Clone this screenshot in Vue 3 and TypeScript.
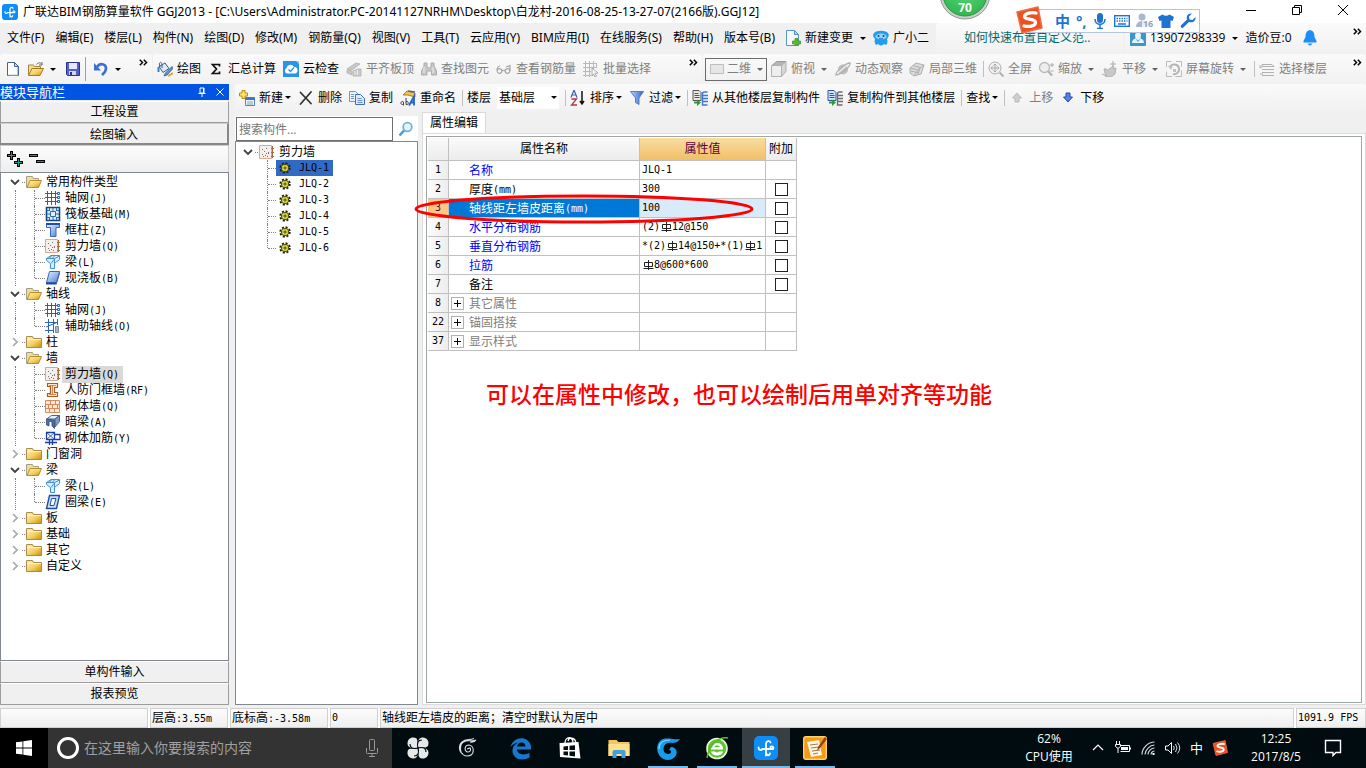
<script setup lang="ts">
import { ref } from 'vue'

interface Tool {
  icon?: string
  label?: string
  caret?: boolean
  off?: boolean
  sep?: boolean
}
interface Leaf {
  icon: string
  text: string
  key: string
  selected?: boolean
}
interface Branch {
  text: string
  open: boolean
  children: Leaf[]
}
interface Part {
  text?: string
  bar?: boolean
}
interface Prop {
  no: number
  name: string
  unit?: string
  kind: 'key' | 'plain' | 'group'
  value: Part[]
  check: boolean
  active?: boolean
}

const menus = [
  '文件(F)', '编辑(E)', '楼层(L)', '构件(N)', '绘图(D)', '修改(M)', '钢筋量(Q)', '视图(V)',
  '工具(T)', '云应用(Y)', 'BIM应用(I)', '在线服务(S)', '帮助(H)', '版本号(B)',
]

const drawTools: Tool[] = [
  { icon: 'paint', label: '绘图' },
  { icon: 'sigma', label: '汇总计算' },
  { icon: 'cloud', label: '云检查' },
  { icon: 'align', label: '平齐板顶', off: true },
  { icon: 'binoc', label: '查找图元', off: true },
  { icon: 'glasses', label: '查看钢筋量', off: true },
  { icon: 'batch', label: '批量选择', off: true },
]
const viewTools: Tool[] = [
  { icon: 'cube', label: '俯视', caret: true, off: true },
  { icon: 'orbit', label: '动态观察', off: true },
  { icon: 'part3d', label: '局部三维', off: true },
  { sep: true },
  { icon: 'full', label: '全屏', off: true },
  { icon: 'zoom', label: '缩放', caret: true, off: true },
  { icon: 'hand', label: '平移', caret: true, off: true },
  { icon: 'rotate', label: '屏幕旋转', caret: true, off: true },
  { sep: true },
  { icon: 'floors', label: '选择楼层', off: true },
]
const editTools: Tool[] = [
  { icon: 'new', label: '新建', caret: true },
  { icon: 'cross', label: '删除' },
  { icon: 'copy', label: '复制' },
  { icon: 'rename', label: '重命名' },
  { sep: true },
]
const sortTools: Tool[] = [
  { sep: true },
  { icon: 'sort', label: '排序', caret: true },
  { icon: 'filter', label: '过滤', caret: true },
  { sep: true },
  { icon: 'copyfrom', label: '从其他楼层复制构件' },
  { icon: 'copyto', label: '复制构件到其他楼层' },
  { sep: true },
  { label: '查找', caret: true },
  { sep: true },
  { icon: 'up', label: '上移', off: true },
  { icon: 'down', label: '下移' },
]

const branches: Branch[] = [
  {
    text: '常用构件类型', open: true, children: [
      { icon: 'grid', text: '轴网', key: '(J)' },
      { icon: 'raft', text: '筏板基础', key: '(M)' },
      { icon: 'column', text: '框柱', key: '(Z)' },
      { icon: 'wall', text: '剪力墙', key: '(Q)' },
      { icon: 'beam', text: '梁', key: '(L)' },
      { icon: 'slab', text: '现浇板', key: '(B)' },
    ],
  },
  {
    text: '轴线', open: true, children: [
      { icon: 'grid', text: '轴网', key: '(J)' },
      { icon: 'auxaxis', text: '辅助轴线', key: '(O)' },
    ],
  },
  { text: '柱', open: false, children: [] },
  {
    text: '墙', open: true, children: [
      { icon: 'wall', text: '剪力墙', key: '(Q)', selected: true },
      { icon: 'frame', text: '人防门框墙', key: '(RF)' },
      { icon: 'brick', text: '砌体墙', key: '(Q)' },
      { icon: 'hidden', text: '暗梁', key: '(A)' },
      { icon: 'rebar', text: '砌体加筋', key: '(Y)' },
    ],
  },
  { text: '门窗洞', open: false, children: [] },
  {
    text: '梁', open: true, children: [
      { icon: 'beam', text: '梁', key: '(L)' },
      { icon: 'ring', text: '圈梁', key: '(E)' },
    ],
  },
  { text: '板', open: false, children: [] },
  { text: '基础', open: false, children: [] },
  { text: '其它', open: false, children: [] },
  { text: '自定义', open: false, children: [] },
]

const walls = ['JLQ-1', 'JLQ-2', 'JLQ-3', 'JLQ-4', 'JLQ-5', 'JLQ-6']
const current = ref('JLQ-1')
const keyword = ref('')
const floor = ref('基础层')
const viewMode = ref('二维')
const taskQuery = ref('')

const props: Prop[] = [
  { no: 1, name: '名称', kind: 'key', value: [{ text: 'JLQ-1' }], check: false },
  { no: 2, name: '厚度', unit: '(mm)', kind: 'plain', value: [{ text: '300' }], check: true },
  { no: 3, name: '轴线距左墙皮距离', unit: '(mm)', kind: 'key', value: [{ text: '100' }], check: true, active: true },
  { no: 4, name: '水平分布钢筋', kind: 'key', value: [{ text: '(2)' }, { bar: true }, { text: '12@150' }], check: true },
  {
    no: 5, name: '垂直分布钢筋', kind: 'key', check: true,
    value: [{ text: '*(2)' }, { bar: true }, { text: '14@150+*(1)' }, { bar: true }, { text: '1' }],
  },
  { no: 6, name: '拉筋', kind: 'key', value: [{ bar: true }, { text: '8@600*600' }], check: true },
  { no: 7, name: '备注', kind: 'plain', value: [], check: true },
  { no: 8, name: '其它属性', kind: 'group', value: [], check: false },
  { no: 22, name: '锚固搭接', kind: 'group', value: [], check: false },
  { no: 37, name: '显示样式', kind: 'group', value: [], check: false },
]

const pinned = [
  { icon: 'pinwheel', name: '应用' },
  { icon: 'swirl', name: '旋风' },
]
const apps = [
  { icon: 'edge', name: '浏览器', state: '' },
  { icon: 'store', name: '商店', state: '' },
  { icon: 'explorer', name: '文件资源管理器', state: '' },
  { icon: 'gblue', name: '广联达', state: 'running' },
  { icon: 'egreen', name: '网页', state: 'running' },
  { icon: 'logo', name: '钢筋算量', state: 'running front' },
  { icon: 'notes', name: '便笺', state: 'running' },
]
</script>

<template>
  <div class="desktop">
    <svg class="sprite" width="0" height="0" aria-hidden="true">
      <defs>
        <linearGradient id="gFolder" x1="0" y1="0" x2="1" y2="1">
          <stop offset="0" stop-color="#fff3b8" /><stop offset=".55" stop-color="#f3cf62" /><stop offset="1" stop-color="#c98d12" />
        </linearGradient>
        <linearGradient id="gBlue" x1="0" y1="0" x2="1" y2="1">
          <stop offset="0" stop-color="#eaf3ff" /><stop offset="1" stop-color="#4b7fd6" />
        </linearGradient>
        <linearGradient id="gFunnel" x1="0" y1="0" x2="1" y2="0">
          <stop offset="0" stop-color="#b9d4fb" /><stop offset="1" stop-color="#2d64c8" />
        </linearGradient>
        <radialGradient id="gBall" cx=".5" cy=".3" r=".7">
          <stop offset="0" stop-color="#62dd7c" /><stop offset="1" stop-color="#32b552" />
        </radialGradient>
      </defs>
      <symbol id="logo" viewBox="0 0 24 24">
        <rect width="24" height="24" rx="5" fill="#0d8df5" />
        <path d="M12 19.500V8c0-3 3.500-4 4.500-1.500M4.500 11.500c0 3 2.500 3 4 1.500h10.500c1-2-1-3.500-2.500-2M12 16c0 4 3.500 4 4 1.500" fill="none" stroke="#fff" stroke-width="1.800" stroke-linecap="round" />
      </symbol>
      <symbol id="doc" viewBox="0 0 16 16">
        <path d="M2.500 1.500h7l4 4v9h-11z" fill="#fff" stroke="#47648f" /><path d="M9.500 1.500v4h4z" fill="#cfdcf0" stroke="#47648f" /><path d="M12.500 6v8h-9" fill="none" stroke="#b9cae6" />
      </symbol>
      <symbol id="open" viewBox="0 0 16 16">
        <path d="M.5 14V4h5l1 1.500h6V8" fill="#f5dc8c" stroke="#a5843c" /><path d="M.5 14.500 4 7.500h11.500L12 14.500z" fill="url(#gFolder)" stroke="#a87c1b" /><path d="M8.500 3.500c2-2.500 4-2 5.500 0m0-2.500v3h-3" fill="none" stroke="#5c6f8c" />
      </symbol>
      <symbol id="save" viewBox="0 0 16 16">
        <path d="M1.500 1.500h13v13h-12l-1-1z" fill="#5760c8" stroke="#2c3491" /><path d="M4 2h8v6H4z" fill="#e6e9fb" /><path d="M4 10h7v4H4z" fill="#d4d7e6" /><path d="M5 11h2v3H5z" fill="#2c3491" />
      </symbol>
      <symbol id="undo" viewBox="0 0 16 16">
        <path d="M4 6c3-4.500 9-3.500 9 1.500 0 3-2 4.500-4 6.500" fill="none" stroke="#3d6fd0" stroke-width="2.600" /><path d="M1 2v7.500h7z" fill="#3d6fd0" />
      </symbol>
      <symbol id="paint" viewBox="0 0 16 16">
        <path d="m2 5.500 6-3.500 4 5.500-6 4z" fill="#dfe8f4" stroke="#3e5f8c" /><path d="M3 6C1 2 4-.5 5 3v4" fill="none" stroke="#3e5f8c" /><path d="M1.500 6v5" stroke="#3f7fd5" stroke-width="2" /><path d="m15 5.500-6.500 6.500-1.500 3 3-1 5.500-6z" fill="#5f97dd" stroke="#2b5590" stroke-width=".8" /><path d="m11 15 5-3" stroke="#e0a020" stroke-width="2" />
      </symbol>
      <symbol id="sigma" viewBox="0 0 16 16">
        <path d="M11.500 5.500V3.500H4.500l4 4.500-4 4.500h7v-2" fill="none" stroke="#111" stroke-width="1.700" />
      </symbol>
      <symbol id="cloud" viewBox="0 0 16 16">
        <path d="M0 0h16v16H0z" fill="#2894e8" /><path d="M4 12.500a3 3 0 0 1-.5-5.500 4 4 0 0 1 7.500-1 3.300 3.300 0 0 1 1 6.500z" fill="#fff" /><path d="m5.500 8.500 2 2L11 6.500" fill="none" stroke="#2894e8" stroke-width="1.400" /><path d="M13 0h3v3z" fill="#9bd0fa" />
      </symbol>
      <symbol id="align" viewBox="0 0 16 16">
        <path d="m1 8 9-6 4 1-8 6zM1 9v3l5 2v-4zM7 10v5h8V8h-3z" fill="#c8c8c8" stroke="#b0b0b0" stroke-width=".8" /><path d="M9 10v4m2.500-5v5" stroke="#eee" />
      </symbol>
      <symbol id="binoc" viewBox="0 0 16 16">
        <path d="M3 2h3v3l1 2h2l1-2V2h3v3l2.500 5v4h-5v-4H6v4H.5v-4L3 5z" fill="#c6c6c6" stroke="#adadad" /><path d="M3 6v6m9-6v6" stroke="#eee" />
      </symbol>
      <symbol id="glasses" viewBox="0 0 16 16">
        <path d="M4 5C2 5 1 7 1 9m9-3 4-1.500V10" fill="none" stroke="#a8a8a8" stroke-width="1.200" /><circle cx="3.500" cy="10" r="2.300" fill="none" stroke="#a8a8a8" stroke-width="1.200" /><circle cx="11.500" cy="10" r="2.300" fill="none" stroke="#a8a8a8" stroke-width="1.200" /><path d="M6 9.500h3.500" stroke="#a8a8a8" stroke-width="1.200" />
      </symbol>
      <symbol id="batch" viewBox="0 0 16 16">
        <path d="M0 2.500h14M0 6.500h14M0 10.500h8M0 14.500h8M2.500 0v16M6.500 0v16M10.500 0v8M13.500 2v5" stroke="#b8b8b8" /><path d="m9 7 6 5-3 .3 1.500 3-1.500.7-1.500-3L9 15z" fill="#f6f6f6" stroke="#999" stroke-width=".8" />
      </symbol>
      <symbol id="flat" viewBox="0 0 16 16">
        <path d="M1.500 3.500h13v9h-13z" fill="#e6e6e6" stroke="#bdbdbd" />
      </symbol>
      <symbol id="cube" viewBox="0 0 16 16">
        <path d="m1 4.500 4.500-4H15l-4 4z" fill="#b4b4b4" stroke="#999" /><path d="M.5 4.500h10v11H.5z" fill="#eee" stroke="#b0b0b0" /><path d="m10.500 4.500 4.500-4v10l-4.500 5z" fill="#d6d6d6" stroke="#b0b0b0" />
      </symbol>
      <symbol id="orbit" viewBox="0 0 16 16">
        <circle cx="8" cy="8.500" r="5" fill="#bdbdbd" /><path d="M1 14c-1-3 10-12 14-12 1 3-8 11-14 12z" fill="none" stroke="#b0b0b0" stroke-width="1.300" /><path d="M4 11 12 4" stroke="#e9e9e9" stroke-width="1.500" />
      </symbol>
      <symbol id="part3d" viewBox="0 0 16 16">
        <path d="m1 7 6-5 8 2-3 9-7 2-4-3z" fill="#dcdcdc" stroke="#b0b0b0" /><path d="m1 7 8 2 6-5M9 9l-4 6M4 4.500l7 2-2 7M2 10l8 2" fill="none" stroke="#b0b0b0" />
      </symbol>
      <symbol id="full" viewBox="0 0 16 16">
        <circle cx="7" cy="7" r="6" fill="#f0f0f0" stroke="#b0b0b0" /><path d="M7 3v8M3 7h8M5.500 4.500 7 3l1.500 1.500m-3 5L7 11l1.500-1.500m-4-4L3 7l1.500 1.500m5-3L11 7 9.500 8.500" fill="none" stroke="#a8a8a8" /><path d="m11.500 11.500 4 4" stroke="#b0b0b0" stroke-width="2" />
      </symbol>
      <symbol id="zoom" viewBox="0 0 16 16">
        <circle cx="6.500" cy="6.500" r="5" fill="#eee" stroke="#bababa" stroke-width="1.300" /><path d="m10 10 4 4.500" stroke="#b4b4b4" stroke-width="2.500" /><path d="M12 4h4M14 2v4M12.500 10h3" stroke="#aaa" />
      </symbol>
      <symbol id="hand" viewBox="0 0 16 16">
        <path d="M2 8c2-1 3 1 4 1l5-4 1 1-1 2 3-1-1 6-4 3H4z" fill="#c8c8c8" stroke="#b2b2b2" /><path d="M11 0v6M8 3h6M0 13l5 2" stroke="#aaa" />
      </symbol>
      <symbol id="rotate" viewBox="0 0 16 16">
        <path d="M.5 6V.5h5M10 .5h5.500v5m0 4v6h-6M6 15.500H.5v-5" fill="none" stroke="#bcbcbc" /><path d="M4 6c2-4 8-3 9 1s-3 7-6 6" fill="none" stroke="#b4b4b4" stroke-width="1.800" /><path d="m2 5 5-1-2 5zM7 8h3v3H7z" fill="#c0c0c0" />
      </symbol>
      <symbol id="floors" viewBox="0 0 16 16">
        <path d="M3 3.500h10l2 2H3zM3 8.500h12M3 11.500h12M3 14.500h12M1 4v3l2-1M1 13h3" fill="none" stroke="#b0b0b0" />
      </symbol>
      <symbol id="newdoc" viewBox="0 0 16 16">
        <path d="M1.500.5h8l4 4v11h-12z" fill="#f5faff" stroke="#5b93c5" /><path d="M9.500.5v4h4z" fill="#b9d9f3" stroke="#5b93c5" /><path d="M10 8.500h3v2.500h2.500v3H13v2h-3v-2H7.500v-3H10z" fill="#58b92b" stroke="#3c911f" stroke-width=".7" />
      </symbol>
      <symbol id="mascot" viewBox="0 0 16 16">
        <path d="M1 3c3-3 11-3 14 0 1.500 2 .5 4-1 6 1 3 0 5-1 6l-2-1-2 1.500h-2L5 14l-2 1C2 13 1 12 2 9 0 7-.5 5 1 3z" fill="#249cee" /><ellipse cx="8" cy="6.500" rx="5.500" ry="3" fill="#8fd2fb" /><circle cx="5.500" cy="6" r="1" fill="#0a4f92" /><circle cx="10.500" cy="6" r="1" fill="#0a4f92" /><path d="M6 8.500q2 1 4 0" stroke="#0a4f92" fill="none" stroke-width=".8" />
      </symbol>
      <symbol id="person" viewBox="0 0 16 16">
        <rect width="16" height="16" rx="1" fill="#3c96ca" /><path d="M2 13c0-3 2-4 3.500-4.500L5 5c0-3.500 6-3.500 6 0l-.5 3.500C12 9 14 10 14 13z" fill="#e8f6ff" /><path d="m6.500 9.500 1.500 2 1.500-2" fill="none" stroke="#3c96ca" />
      </symbol>
      <symbol id="bell" viewBox="0 0 16 16">
        <path d="M8 0c4 1 4.500 4 4.500 7l2 4v1.500h-13V11l2-4C3.500 4 4 1 8 0z" fill="#1e8df5" /><path d="M5.500 13.500h5q-2.500 4-5 0z" fill="#1e8df5" />
      </symbol>
      <symbol id="new" viewBox="0 0 16 16">
        <path d="M3 .5h3v2.500h2.500v3H6v2.500H3V6H.5V3H3z" fill="#ffe36b" stroke="#b88d15" /><path d="M6.500 7.500h9v8h-9z" fill="#f0f6ff" stroke="#5a7eb6" /><path d="M6.500 7.500h9v2.500h-9z" fill="#3f74c8" /><path d="M8 12h6M8 14h6" stroke="#7e9dcb" />
      </symbol>
      <symbol id="cross" viewBox="0 0 16 16">
        <path d="M2.500 2.500 13 13.500M13 2 2.500 14" stroke="#333" stroke-width="1.800" stroke-linecap="round" />
      </symbol>
      <symbol id="copy" viewBox="0 0 16 16">
        <path d="M.5 1.500h6l3 3v7h-9z" fill="#eaf2ff" stroke="#6d94d2" /><path d="M6.500 4.500h5l4 4v6h-9z" fill="#dceaff" stroke="#3f6fbc" /><path d="M2 4.500h3M2 6.500h3M2 8.500h3M8.500 8.500h4m-4 2h5m-5 2h5" stroke="#6d94d2" />
      </symbol>
      <symbol id="rename" viewBox="0 0 16 16">
        <path d="m3 5 4-4 8 2v4L8 5z" fill="#f0c54a" stroke="#a08037" /><path d="m8 1 7 1" stroke="#666" stroke-width="1.500" /><path d="M3.500 14.500h-1a1.500 1.500 0 1 1 1-2.500v3.500M6 8v6.500c3 1 3-4 0-3" fill="none" stroke="#444" /><path d="m9 15.500 5-9v9m-4-3h4" fill="none" stroke="#2462c8" stroke-width="1.800" />
      </symbol>
      <symbol id="sort" viewBox="0 0 16 16">
        <path d="M1 7.500 4 0l3 7.500M2 5h4" fill="none" stroke="#3e62a8" stroke-width="1.200" /><path d="M1.500 9h5l-5 6h5.500" fill="none" stroke="#a83b45" stroke-width="1.300" /><path d="M12 1v13m-2-3 2 3 2-3" fill="none" stroke="#111" stroke-width="1.500" />
      </symbol>
      <symbol id="filter" viewBox="0 0 16 16">
        <path d="M1.500 1.500h13L10 8v6.500l-3.500-2V8z" fill="url(#gFunnel)" stroke="#4b7fd4" />
      </symbol>
      <symbol id="copyfrom" viewBox="0 0 16 16">
        <path d="M1 .5h6l2 2v8H1z" fill="#e8e8e8" stroke="#555" /><path d="M2.500 3.500h4M2.500 5.500h5M2.500 7.500h5" stroke="#555" /><path d="M15.500 2h-3c-2 0-2 1-2 2v11h5M11 5.500h5m-5 3h5m-5 3h5" fill="none" stroke="#3b78ce" stroke-width="1.400" /><path d="M2 11.500h3V9.500l4 3L5 16v-2.500H2z" fill="#2e9b38" />
      </symbol>
      <symbol id="copyto" viewBox="0 0 16 16">
        <path d="M1 .5h6l2 2v8H1z" fill="#cfe0fb" stroke="#2c58a5" /><path d="M2.500 3.500h4M2.500 5.500h5M2.500 7.500h5" stroke="#2c58a5" /><path d="M15.500 2h-3c-2 0-2 1-2 2v11h5M11 5.500h5m-5 3h5m-5 3h5" fill="none" stroke="#6c6c6c" stroke-width="1.400" /><path d="M2 11.500h3V9.500l4 3L5 16v-2.500H2z" fill="#2e9b38" />
      </symbol>
      <symbol id="up" viewBox="0 0 16 16"><path d="m8 3 4.500 5H10v4H6V8H3.500z" fill="#cfcfcf" stroke="#bababa" /></symbol>
      <symbol id="down" viewBox="0 0 16 16"><path d="m8 12 4.500-5H10V3H6v4H3.500z" fill="#5584e8" stroke="#2149b5" /></symbol>
      <symbol id="search" viewBox="0 0 16 16">
        <circle cx="9.500" cy="6" r="4.300" fill="#e8f5ff" stroke="#6db4e6" stroke-width="1.800" /><path d="m6 9.500-4.500 5" stroke="#4798d6" stroke-width="2.500" />
      </symbol>
      <symbol id="folder" viewBox="0 0 16 16">
        <path d="M.5 13.500v-11h6l1 2h8v9z" fill="url(#gFolder)" stroke="#a88b4b" /><path d="M1 5.500h14" stroke="#fff6cc" />
      </symbol>
      <symbol id="folderopen" viewBox="0 0 16 16">
        <path d="M.5 13.500v-11h6l1 2h5V6" fill="#f1dd9a" stroke="#a4a088" /><path d="m1 13.500 3-7h11.500l-3 7z" fill="url(#gFolder)" stroke="#b8912f" />
      </symbol>
      <symbol id="grid" viewBox="0 0 16 16">
        <path d="M0 3.500h12M0 7.500h12M0 11.500h12M2.500 1v14M6.500 1v14M10.500 1v14" stroke="#2f5cb5" /><path d="M12.500 2.500h2v2h-2zm0 4h2v2h-2zm0 4h2v2h-2z" fill="none" stroke="#2f5cb5" />
      </symbol>
      <symbol id="raft" viewBox="0 0 16 16">
        <path d="M1.500 1.500h13v13h-13z" fill="#dfeefa" stroke="#104a86" stroke-width="1.600" /><path d="M5.500 5.500h5v5h-5zM4.500 2v3m7-3v3m-7 6v3m7-3v3M2 4.500h3M2 11.500h3m6-7h3m-3 7h3M8 2v3m0 6v3M2 8h3m6 0h3" fill="none" stroke="#2b6aa5" />
      </symbol>
      <symbol id="column" viewBox="0 0 16 16">
        <path d="M1.500 2.500h13v3H11v9H5.500v-9h-4z" fill="url(#gBlue)" stroke="#3a68bd" /><path d="M1 2h14" stroke="#1f4fae" stroke-width="2" />
      </symbol>
      <symbol id="wall" viewBox="0 0 16 16">
        <path d="M.5 1.500h12v13H.5z" fill="#f3efec" stroke="#dba78d" /><path d="M3 5.500h1m3-1h1M5 7.500h1m3 1h1M3 10.500h1m2 1h1m2-2h1M4 12.500h1m3 0h1M7 9.500h1" stroke="#777" /><path d="M13.500 2v12M12 4.500h3M12 8.500h3m-3 4h3" stroke="#b5683d" />
      </symbol>
      <symbol id="beam" viewBox="0 0 16 16">
        <path d="M1.500 4.500 6 1.500h8.500v4l-5 4v5h-4v-5l-4-3z" fill="#d9edff" stroke="#3f8fd6" /><path d="M1.500 4.500h8L14.500 2M9.500 9.500V5M4 4.500l3-3m0 3 3-3m-4 8 3-4" fill="none" stroke="#3f8fd6" />
      </symbol>
      <symbol id="slab" viewBox="0 0 16 16">
        <path d="M4.500 1.500h10l-3 11H1.500z" fill="url(#gBlue)" stroke="#3868bc" /><path d="M1 12.500v2h10.500l3.500-11v-2l-3.500 11z" fill="#204b9d" />
      </symbol>
      <symbol id="auxaxis" viewBox="0 0 16 16">
        <path d="M0 4.500h13M0 12.500h8M3.500 1v14M8.500 1v14M12.500 1v6M1 9l12-5" stroke="#2c64b8" /><path d="M10.500 8.500h3v6h-3z" fill="#a9b6c8" stroke="#7d8a9d" />
      </symbol>
      <symbol id="frame" viewBox="0 0 16 16">
        <path d="M2.500 1.500h10v4h-3v5h3v4h-10v-3h3v-7h-3z" fill="#ffe9d2" stroke="#b05b1d" stroke-width="1.200" /><path d="M4 3.500h7M7.500 4v8M4 12.500h7" stroke="#d58b55" />
      </symbol>
      <symbol id="brick" viewBox="0 0 16 16">
        <path d="M.5 2.500h14v12H.5z" fill="#fbe8dc" stroke="#d58a5c" /><path d="M.5 6.500h14m-14 4h14M5.500 3v3m5-3v3m-7 1v3m4-3v3m5-3v3m-8 1v3m5-3v3" stroke="#d58a5c" />
      </symbol>
      <symbol id="hidden" viewBox="0 0 16 16">
        <path d="m1.500 5 5-3.500h8L10 5z" fill="#e6eef8" stroke="#47658f" /><path d="M10 5l4.500-3.500v6L10 13z" fill="#7f9bc0" stroke="#47658f" /><path d="m1.500 5 8 1v8.500L7 12V8L4 7v5l-2.500-1z" fill="#4b6fa8" stroke="#2f4d78" stroke-width=".8" />
      </symbol>
      <symbol id="rebar" viewBox="0 0 16 16">
        <path d="M1.500 2.500h8v7h-8zM10 4.500h5v5h-5M4.500 10v5m3-5v5M0 12.500h12" fill="none" stroke="#1d3fa5" stroke-width="1.300" /><path d="m2 3 7 6m0-6L2 9" stroke="#2865c4" />
      </symbol>
      <symbol id="ring" viewBox="0 0 16 16">
        <path d="M4.500 1.500h10l-3 13h-10z" fill="#cfe0f8" stroke="#1d4ea5" stroke-width="1.400" /><path d="M6.500 4.500h4.500l-2 7H5z" fill="#fff" stroke="#1d4ea5" />
      </symbol>
      <symbol id="gear" viewBox="0 0 12 12">
        <circle cx="6" cy="6" r="4.700" fill="none" stroke="#22220a" stroke-width="2" stroke-dasharray="2 1.690" /><circle cx="6" cy="6" r="3.700" fill="#f6f03a" stroke="#3a3a10" /><path d="M6 2.500v7M2.500 6h7" stroke="#8a8620" stroke-width=".8" /><circle cx="6" cy="6" r="1" fill="#fffbe0" stroke="#22220a" stroke-width=".8" />
      </symbol>
      <symbol id="bar" viewBox="0 0 12 12">
        <path d="M6.500 1v10M2.500 3.500h8v4h-8zM1.500 9.500h10" fill="none" stroke="#222" />
      </symbol>
      <symbol id="chevdown" viewBox="0 0 12 12"><path d="m2 4 4 4 4-4" fill="none" stroke="#404040" stroke-width="1.800" /></symbol>
      <symbol id="chevright" viewBox="0 0 12 12"><path d="m4 2 4 4-4 4" fill="none" stroke="#a6a6a6" stroke-width="1.600" /></symbol>
      <symbol id="expandall" viewBox="0 0 16 16">
        <path d="M3 0h3v3h3v3H6v3H3V6H0V3h3zM10 7h3v3h3v3h-3v3h-3v-3H7v-3h3z" fill="#000" /><path d="M4 1h1v3h3v1H5v3H4V5H1V4h3zM11 8h1v3h3v1h-3v3h-1v-3H8v-1h3z" fill="#139c94" />
      </symbol>
      <symbol id="foldall" viewBox="0 0 16 16">
        <path d="M0 3h9v3H0zM7 9h9v3H7z" fill="#000" /><path d="M1 4h7v1H1zM8 10h7v1H8z" fill="#139c94" />
      </symbol>
      <symbol id="win" viewBox="0 0 16 16"><path d="M0 2.300 6.500 1.400v6.200H0zM7.300 1.300 16 0v7.600H7.300zM0 8.400h6.500v6.200L0 13.700zM7.300 8.400H16V16l-8.700-1.200z" fill="#fff" /></symbol>
      <symbol id="mic" viewBox="0 0 16 20"><rect x="5.500" y="1.500" width="5" height="11" rx="1" fill="none" stroke="#999" /><path d="M2.500 10v4.500q0 1 1 1h9q1 0 1-1V10M8 15.500V18m-3 .5h6" fill="none" stroke="#999" /></symbol>
      <symbol id="pinwheel" viewBox="0 0 24 24">
        <g fill="#e6e9ea"><path d="M11.500 12C8 13 1 12 1.500 7 2 1 8 .5 10.500 2.500c1.500 2 1 6 1 9.500z" /><path d="M12 11.500C11 8 12 1 17 1.500c6 .5 6.500 6.500 4.500 9-2 1.500-6 1-9.500 1z" /><path d="M12.500 12c3.500-1 10.500 0 10 5-.5 6-6.500 6.500-9 4.500-1.500-2-1-6-1-9.500z" /><path d="M12 12.500c1 3.500 0 10.500-5 10-6-.5-6.500-6.500-4.500-9 2-1.500 6-1 9.500-1z" /></g><path d="M12 12Q4 14 4 8M12 12q-2-8 4-8m-4 8q8-2 8 4m-8-4q2 8-4 8" fill="none" stroke="#000c10" stroke-width="1.200" />
      </symbol>
      <symbol id="swirl" viewBox="0 0 24 24">
        <path d="M21 4c-3 2-6 0-10 1-8 2-7 15 1 15 8 0 8-10 2-11-5 0-5 7-1 7 3 0 3-3 2-4l-3 1M19 2.500c-5 2-8 0-12 3.500-4 4-3 10 1 12M21 4c-2 3-4 2-6 2" fill="none" stroke="#d8dcdd" stroke-width="1.100" />
      </symbol>
      <symbol id="edge" viewBox="0 0 24 24">
        <path d="M1.500 11C4 .5 19-1.500 22 10v3.500H8c.5 5.500 8 6 12.500 3.500v4.500C12 26 3 22 3.500 14 4 9.500 7 7.500 9.500 6.500 6 7 3.500 8.500 1.500 11zM8 10.500h8.500C16.500 5 9 5 8 10.500z" fill="#1679cf" />
      </symbol>
      <symbol id="store" viewBox="0 0 24 24">
        <path d="m1.500 7 19-1 2 16.500L2 21z" fill="#fff" /><path d="M7 7c0-7 8-7 8 0m-5-2c1-4 7-4 8 2" fill="none" stroke="#fff" stroke-width="1.300" /><path d="M5.500 10.500 10 10v4H5.500zm6-.7L17 9.300V14h-5.500zM5.500 15.500H10v4l-4.500-.5zm6 0H17v5l-5.500-.7z" fill="#000d11" />
      </symbol>
      <symbol id="explorer" viewBox="0 0 24 24">
        <path d="M1.500 4h8l2 2h11v14h-21z" fill="#f3c75b" /><path d="M1.500 8h21v12h-21z" fill="#ffe08c" /><path d="M5.500 22v-6q0-2 2-2h9q2 0 2 2v6h-4v-4h-5v4z" fill="#3fa0dc" />
      </symbol>
      <symbol id="gblue" viewBox="0 0 24 24">
        <path d="M24 3c-2 3-5 4-8 4-10-2-11 11-4 11 4 0 4-4 1-4l2-3c8 0 8 12-3 13C2 24-2 11 4 5 9 0 16 4 24 3z" fill="#199be9" /><path d="M3 13C3 6 8 4 14 4" fill="none" stroke="#81d6ff" stroke-width="1.200" />
      </symbol>
      <symbol id="egreen" viewBox="0 0 24 24">
        <circle cx="12" cy="12.500" r="10" fill="#5fc32f" stroke="#e9f8dd" stroke-width="1.600" /><path d="M6 12q1-5 6-5t6 5v1.500H6z" fill="#fff" /><path d="M9 11q3-3.500 6 0z" fill="#5fc32f" /><path d="M6 15.500q1 4 6 4t6-4h-4q-2 2-4 0z" fill="#fff" /><path d="M2 22C4 9 14 0 23 2" fill="none" stroke="#57bb28" stroke-width="1.500" />
      </symbol>
      <symbol id="notes" viewBox="0 0 24 24">
        <rect x=".7" y=".7" width="22.600" height="22.600" rx="2" fill="#f39b16" stroke="#ffd168" stroke-width="1.400" /><path d="m4 6 12-2 3 15-11 2z" fill="#fff7e3" /><path d="m7 9 8-1m-7 4 8-1m-7 4 8-1m-7 4 5-1" stroke="#a47943" /><path d="m22 1-7 10-1 4 3-3 7-9z" fill="#9b3e15" />
      </symbol>
      <symbol id="sogou" viewBox="0 0 28 28">
        <path d="M2 6 23 1l4 21-20 5z" fill="#f0501f" stroke="#ef6d42" stroke-linejoin="round" stroke-width="1.500" /><path d="M21 7c-4-1-12 0-11.500 4 1 3 11 1 11 5.500 0 4-7 4.500-11.500 3.500" fill="none" stroke="#fff" stroke-width="3.300" stroke-linecap="round" />
      </symbol>
      <symbol id="micblue" viewBox="0 0 16 16"><rect x="5" y="0" width="6" height="10" rx="3" fill="#1e73d2" /><path d="M3 6c0 7 10 7 10 0M8 11v4m-3 .5h6" fill="none" stroke="#1e73d2" stroke-width="1.500" /></symbol>
      <symbol id="keys" viewBox="0 0 16 16"><rect x=".7" y="2.700" width="14.600" height="10.600" fill="none" stroke="#1e73d2" stroke-width="1.400" /><path d="M2.500 5.500h11M2.500 8h11" stroke="#1e73d2" stroke-width="1.500" stroke-dasharray="1.500 1" /><path d="M4 11h8" stroke="#1e73d2" stroke-width="1.500" /></symbol>
      <symbol id="user16" viewBox="0 0 16 16"><circle cx="6" cy="4" r="3.500" fill="#aab8cf" /><path d="M0 14c0-8 12-8 12 0z" fill="#aab8cf" /><path d="M6 8h10v6H6z" fill="#fff" opacity=".75" /></symbol>
      <symbol id="shirt" viewBox="0 0 16 16"><path d="M4.500 1.500q3.500 2.500 7 0L16 4l-1.500 4-2-.5V15h-9V7.500l-2 .5L0 4z" fill="#1e73d2" /></symbol>
      <symbol id="wrench" viewBox="0 0 16 16"><path d="M15.500 4 12.500 7 9.500 6.500 9 3.500 12 .5C8 0 6 3 7 6.500L.8 12.500q-.5 2.500 2 2.500L9 9c4 1 7-1 6.500-5z" fill="#1e73d2" /></symbol>
      <symbol id="battery" viewBox="0 0 16 16"><path d="M5.500 5.500h9v6h-9" fill="none" stroke="#fff" /><path d="M6 7h7v3H6zM15 7.500h1v2h-1z" fill="#fff" /><path d="M1.500 1v3m3-3v3M.5 4.500h5v2L3.500 8h-1L.5 6.500zM3 8v5" fill="none" stroke="#fff" /></symbol>
      <symbol id="wifi" viewBox="0 0 16 16"><path d="M2 14.500C2 8 8 2 14.500 2M5 14.500C5 10 10 5 14.500 5M8 14.500c0-3.500 3.500-6.500 6.500-6.500M11 14.500c0-2 2-3.500 3.500-3.500" fill="none" stroke="#cfd3d4" stroke-width="1.200" /><path d="M12.500 13h2v2h-2z" fill="#fff" /></symbol>
      <symbol id="volume" viewBox="0 0 16 16"><path d="M.5 6H3l3.500-3.500v11L3 10H.5z" fill="none" stroke="#fff" /><path d="M8.500 6q1.500 2 0 4M10.500 4q3 4 0 8M12.500 2.500q4.500 5.500 0 11" fill="none" stroke="#ddd" /></symbol>
      <symbol id="chat" viewBox="0 0 18 18"><path d="M1.500 1.500h15v12H12l-3 3v-3H1.500z" fill="none" stroke="#fff" stroke-width="1.400" /></symbol>
      <symbol id="more" viewBox="0 0 9 7"><path d="m.8.8 2.700 2.700L.8 6.200M4.800.8l2.700 2.700-2.700 2.700" fill="none" stroke="#000" stroke-width="1.500" /></symbol>
    </svg>

    <header class="titlebar">
      <svg class="i16"><use href="#logo" /></svg>
      <h1>广联达BIM钢筋算量软件 GGJ2013 - [C:\Users\Administrator.PC-20141127NRHM\Desktop\白龙村-2016-08-25-13-27-07(2166版).GGJ12]</h1>
      <div class="winbtns">
        <button aria-label="最小化"><svg viewBox="0 0 12 12"><path d="M1 6.500h10" /></svg></button>
        <button aria-label="还原"><svg viewBox="0 0 12 12"><path d="M1.500 3.500h7v7h-7zM3.500 3.500v-2h7v7h-2" /></svg></button>
        <button aria-label="关闭"><svg viewBox="0 0 12 12"><path d="m1 1 10 10M11 1 1 11" /></svg></button>
      </div>
    </header>

    <nav class="menubar">
      <div class="menus">
        <button v-for="m in menus" :key="m">{{ m }}</button>
      </div>
      <button class="tool"><svg class="i16"><use href="#newdoc" /></svg>新建变更<i class="caret wide"></i></button>
      <button class="tool"><svg class="i16"><use href="#mascot" /></svg>广小二</button>
      <div class="strip tip"><a href="#">如何快速布置自定义范..</a></div>
      <div class="strip account">
        <button class="tool"><svg class="i16"><use href="#person" /></svg>13907298339<i class="caret wide"></i></button>
        <button class="tool">造价豆:0<svg class="i16 bell"><use href="#bell" /></svg></button>
        <button class="more" aria-label="更多"><svg><use href="#more" /></svg></button>
      </div>
    </nav>

    <div class="toolbars">
      <div class="strip files">
        <button class="tool" aria-label="新建"><svg class="i16"><use href="#doc" /></svg></button>
        <button class="tool" aria-label="打开"><svg class="i16"><use href="#open" /></svg><i class="caret"></i></button>
        <button class="tool" aria-label="保存"><svg class="i16"><use href="#save" /></svg></button>
        <span class="sep dark"></span>
        <button class="tool" aria-label="撤销"><svg class="i16"><use href="#undo" /></svg><i class="caret"></i></button>
        <button class="more" aria-label="更多"><svg><use href="#more" /></svg></button>
      </div>
      <div class="strip draw">
        <button v-for="t in drawTools" :key="t.label" class="tool" :class="{ off: t.off }">
          <svg class="i16"><use :href="'#' + t.icon" /></svg>{{ t.label }}
        </button>
        <button class="more" aria-label="更多"><svg><use href="#more" /></svg></button>
      </div>
      <div class="strip view">
        <label class="mode">
          <svg class="i16"><use href="#flat" /></svg>
          <select v-model="viewMode" aria-label="视图模式"><option>二维</option><option>三维</option></select>
          <i class="caret"></i>
        </label>
        <template v-for="(t, n) in viewTools" :key="n">
          <span v-if="t.sep" class="sep"></span>
          <button v-else class="tool" :class="{ off: t.off }">
            <svg class="i16"><use :href="'#' + t.icon" /></svg>{{ t.label }}<i v-if="t.caret" class="caret"></i>
          </button>
        </template>
        <button class="more" aria-label="更多"><svg><use href="#more" /></svg></button>
      </div>
    </div>

    <main class="work">
      <aside class="navigator">
        <div class="paneltitle">
          <h2>模块导航栏</h2>
          <button aria-label="固定"><svg viewBox="0 0 10 10"><path d="M3 1h4v5H3zM1.500 6.500h7M5 6.500V10M6.500 1v5" /></svg></button>
          <button aria-label="关闭"><svg viewBox="0 0 10 10"><path d="m1.500 1.500 7 7m0-7-7 7" /></svg></button>
        </div>
        <button class="section">工程设置</button>
        <button class="section pressed">绘图输入</button>
        <div class="treebar">
          <button aria-label="全部展开"><svg class="i16"><use href="#expandall" /></svg></button>
          <button aria-label="全部折叠"><svg class="i16"><use href="#foldall" /></svg></button>
        </div>
        <div class="tree">
          <template v-for="b in branches" :key="b.text">
            <div class="row">
              <svg class="chev"><use :href="b.open ? '#chevdown' : '#chevright'" /></svg>
              <span class="dot"></span>
              <svg class="i16"><use :href="b.open ? '#folderopen' : '#folder'" /></svg>
              <span class="label">{{ b.text }}</span>
            </div>
            <div v-for="(c, n) in b.children" :key="b.text + c.text" class="row child" :class="{ chosen: c.selected, last: n === b.children.length - 1 }">
              <span class="trunk"></span><span class="stem"></span><span class="twig"></span>
              <svg class="i16"><use :href="'#' + c.icon" /></svg>
              <span class="label">{{ c.text }}<span class="mono">{{ c.key }}</span></span>
            </div>
          </template>
        </div>
        <button class="section">单构件输入</button>
        <button class="section">报表预览</button>
      </aside>

      <section class="content">
        <div class="strip edit">
          <template v-for="(t, n) in editTools" :key="n">
            <span v-if="t.sep" class="sep"></span>
            <button v-else class="tool">
              <svg class="i16"><use :href="'#' + t.icon" /></svg>{{ t.label }}<i v-if="t.caret" class="caret near"></i>
            </button>
          </template>
          <label class="floor">楼层
            <span class="pick"><select v-model="floor"><option>基础层</option><option>首层</option></select><i class="caret"></i></span>
          </label>
          <template v-for="(t, n) in sortTools" :key="'s' + n">
            <span v-if="t.sep" class="sep"></span>
            <button v-else class="tool" :class="{ off: t.off }">
              <svg v-if="t.icon" class="i16"><use :href="'#' + t.icon" /></svg>{{ t.label }}<i v-if="t.caret" class="caret near"></i>
            </button>
          </template>
        </div>

        <div class="split">
          <div class="parts">
            <div class="find">
              <input v-model="keyword" type="text" placeholder="搜索构件..." aria-label="搜索构件" />
              <button aria-label="搜索"><svg class="i16"><use href="#search" /></svg></button>
            </div>
            <div class="tree parttree">
              <div class="row">
                <svg class="chev"><use href="#chevdown" /></svg>
                <span class="dot"></span>
                <svg class="i16"><use href="#wall" /></svg>
                <span class="label">剪力墙</span>
              </div>
              <div v-for="(w, n) in walls" :key="w" class="row child" :class="{ last: n === walls.length - 1 }" @click="current = w">
                <span class="stem"></span><span class="twig"></span>
                <span class="item mono" :class="{ on: current === w }"><svg class="gear"><use href="#gear" /></svg>{{ w }}</span>
              </div>
            </div>
          </div>

          <div class="editor">
            <div class="tabs"><button>属性编辑</button></div>
            <div class="pane">
              <div class="sheet">
                <div class="gridwrap">
                  <table>
                    <colgroup><col class="cno" /><col class="cname" /><col class="cval" /><col class="cadd" /></colgroup>
                    <thead>
                      <tr><th></th><th>属性名称</th><th class="hot">属性值</th><th>附加</th></tr>
                    </thead>
                    <tbody>
                      <tr v-for="p in props" :key="p.no" :class="[p.kind, { active: p.active }]">
                        <th class="mono">{{ p.no }}</th>
                        <td class="name">
                          <span class="cell"><span class="slot"><button v-if="p.kind === 'group'" class="plus" :aria-label="'展开' + p.name"></button></span>{{ p.name }}<span class="mono">{{ p.unit }}</span></span>
                        </td>
                        <td class="val mono">
                          <span class="cell"><template v-for="(v, n) in p.value" :key="n"><svg v-if="v.bar" class="bar"><use href="#bar" /></svg><template v-else>{{ v.text }}</template></template></span>
                        </td>
                        <td class="add"><input v-if="p.check" type="checkbox" :aria-label="p.name + '附加'" /></td>
                      </tr>
                    </tbody>
                  </table>
                  <svg class="circled" viewBox="0 0 340 32"><ellipse cx="170" cy="16" rx="168" ry="13" /></svg>
                </div>
                <p class="remark">可以在属性中修改，也可以绘制后用单对齐等功能</p>
              </div>
            </div>
          </div>
        </div>
      </section>
    </main>

    <footer class="status">
      <span class="s1"></span>
      <span class="s2">层高<span class="mono">:3.55m</span></span>
      <span class="s3">底标高<span class="mono">:-3.58m</span></span>
      <span class="s4 mono">0</span>
      <span class="s5">轴线距左墙皮的距离；清空时默认为居中</span>
      <span class="s6 mono">1091.9 FPS</span>
    </footer>

    <div class="taskbar">
      <button class="start" aria-label="开始"><svg class="i16"><use href="#win" /></svg></button>
      <div class="cortana">
        <span class="halo"></span>
        <input v-model="taskQuery" type="text" placeholder="在这里输入你要搜索的内容" aria-label="搜索" />
        <svg class="mic"><use href="#mic" /></svg>
      </div>
      <div class="apps">
        <button v-for="a in pinned" :key="a.icon" :aria-label="a.name"><svg><use :href="'#' + a.icon" /></svg></button>
      </div>
      <div class="apps open">
        <button v-for="a in apps" :key="a.icon" :class="a.state" :aria-label="a.name"><svg><use :href="'#' + a.icon" /></svg></button>
      </div>
      <div class="cpu">62%<br />CPU使用</div>
      <div class="tray">
        <svg class="i16" viewBox="0 0 16 16"><path d="m3 10 5-5 5 5" fill="none" stroke="#fff" stroke-width="1.200" /></svg>
        <svg class="i16"><use href="#battery" /></svg>
        <svg class="i16"><use href="#wifi" /></svg>
        <svg class="i16"><use href="#volume" /></svg>
        <span>中</span>
        <svg class="i16"><use href="#sogou" /></svg>
      </div>
      <div class="clock">12:25<br />2017/8/5</div>
      <button class="notice" aria-label="通知"><svg><use href="#chat" /></svg></button>
    </div>

    <div class="ball">
      <svg viewBox="0 0 56 24"><circle cx="28" cy="-6" r="25" fill="#c9d0cb" stroke="#8f9a93" /><circle cx="28" cy="-6" r="22" fill="url(#gBall)" stroke="#2a9344" /></svg>
      <span>70</span>
    </div>
    <div class="ime">
      <svg class="slogo"><use href="#sogou" /></svg>
      <b>中</b>
      <b>°,</b>
      <svg class="i16"><use href="#micblue" /></svg>
      <svg class="i16"><use href="#keys" /></svg>
      <span class="badge"><svg class="i16"><use href="#user16" /></svg><small>16</small></span>
      <svg class="i16"><use href="#shirt" /></svg>
      <svg class="i16"><use href="#wrench" /></svg>
    </div>
  </div>
</template>

<style>
html,
body {
  margin: 0;
  background: #f0f0f0;
}
</style>

<style scoped>
.desktop {
  position: relative;
  display: flex;
  flex-direction: column;
  height: 100vh;
  overflow: hidden;
  background: #f0f0f0;
  color: #000;
  font: 12px/16px "Open Sans", "Noto Sans CJK SC", sans-serif;
}
.sprite {
  position: absolute;
}
button,
input,
select {
  font: inherit;
  color: inherit;
  margin: 0;
  padding: 0;
  border: 0;
  background: none;
  appearance: none;
  border-radius: 0;
  outline: 0;
}
button {
  white-space: nowrap;
}
.i16 {
  width: 16px;
  height: 16px;
  flex: none;
}
.mono {
  font-family: "DejaVu Sans Mono", "Noto Sans CJK SC", monospace;
  font-size: 10px;
}
.caret {
  border: 3px solid transparent;
  border-top-color: #000;
  border-bottom: 0;
  flex: none;
  margin: 0 2px;
}
.caret.near {
  margin: 0 0 0 -2px;
}
.caret.wide {
  margin: 0 0 0 3px;
}

.titlebar {
  display: flex;
  align-items: center;
  height: 23px;
  padding-left: 2px;
  background: #fff;
}
.titlebar h1 {
  flex: 1;
  margin: 0 0 0 5px;
  font-family: "Noto Sans", "Noto Sans CJK SC", sans-serif;
  font-size: 12px;
  font-weight: 400;
  white-space: nowrap;
}
.winbtns {
  display: flex;
}
.winbtns button {
  width: 46px;
  height: 20px;
}
.winbtns svg {
  width: 12px;
  height: 12px;
  fill: none;
  stroke: #000;
}

.menubar {
  display: flex;
  align-items: center;
  height: 30px;
  gap: 7px;
}
.menus {
  display: flex;
  gap: 11px;
  padding: 0 3px 0 7px;
  font-family: "Noto Sans", "Noto Sans CJK SC", sans-serif;
}
.tool {
  display: flex;
  align-items: center;
  gap: 4px;
  flex: none;
}
.tool.off {
  color: #808080;
}
.tool.off .caret {
  border-top-color: #606060;
}
.strip {
  display: flex;
  align-items: center;
  align-self: stretch;
  gap: 7px;
  border-radius: 3px;
  background: linear-gradient(#fafafa, #f1f1f1);
}
.tip {
  flex: 1;
  min-width: 0;
  padding-left: 28px;
}
.tip a {
  color: #00696b;
  text-decoration: none;
  white-space: nowrap;
}
.account {
  flex: none;
  width: 236px;
  margin-left: -5px;
  padding-left: 5px;
}
.bell {
  margin-left: 6px;
}
.more {
  align-self: flex-start;
  margin: 5px 4px 0 auto;
  line-height: 0;
}
.more svg {
  width: 9px;
  height: 7px;
}
.sep {
  width: 1px;
  height: 16px;
  background: #c0c0c0;
  flex: none;
  margin-right: -2px;
}
.sep.dark {
  height: 24px;
  background: #a0a0a0;
  margin: 0 0 0 -3px;
}

.toolbars {
  display: flex;
  height: 30px;
  margin-top: 1px;
  gap: 1px;
}
.files {
  flex: none;
  width: 147px;
  padding-left: 5px;
}
.draw {
  flex: none;
  width: 545px;
  padding-left: 4px;
}
.view {
  flex: 1;
  gap: 6px;
  padding-left: 2px;
}
.mode {
  display: flex;
  align-items: center;
  box-sizing: border-box;
  width: 62px;
  height: 23px;
  margin-right: -2px;
  border: 1px solid #6c6c6c;
  padding-left: 3px;
  color: #808080;
}
.mode select {
  width: 30px;
}
.mode select,
.pick select {
  padding-left: 2px;
}
.mode .caret {
  border-top-color: #606060;
  margin: 0 0 0 2px;
}

.work {
  display: flex;
  flex: 1;
  min-height: 0;
  gap: 6px;
}
.navigator {
  display: flex;
  flex-direction: column;
  flex: none;
  width: 229px;
  padding-bottom: 3px;
}
.paneltitle {
  display: flex;
  align-items: center;
  gap: 8px;
  height: 16px;
  margin-bottom: 1px;
  padding-right: 4px;
  background: #0054e3;
  color: #fff;
}
.paneltitle h2 {
  flex: 1;
  margin: 0;
  font-size: 13px;
  font-weight: 400;
}
.paneltitle button {
  line-height: 0;
}
.paneltitle svg {
  width: 10px;
  height: 10px;
  fill: none;
  stroke: #fff;
}
.section {
  flex: none;
  height: 22px;
  border: 1px solid #9c9c9c;
  border-top-color: #fff;
  background: #f0f0f0;
  text-align: center;
}
.section.pressed {
  border: 1px solid #888;
  border-width: 1px 2px 2px 1px;
  border-top-color: #d0d0d0;
  padding-top: 2px;
}
.treebar {
  display: flex;
  align-items: center;
  gap: 6px;
  flex: none;
  box-sizing: border-box;
  height: 27px;
  padding-left: 6px;
  border: 1px solid #ccc;
  border-bottom: 0;
  background: linear-gradient(#fcfcfc, #eee);
}
.treebar button {
  height: 16px;
}
.tree {
  flex: 1;
  min-height: 0;
  overflow: hidden;
  border: 1px solid #828790;
  padding: 1px 0 0 8px;
  background: #fff;
}
.row {
  display: flex;
  align-items: center;
  height: 16px;
  white-space: nowrap;
}
.chev {
  width: 12px;
  height: 12px;
  flex: none;
}
.dot {
  width: 3px;
  margin: 0 1px;
  border-top: 1px dotted #808080;
}
.row .label {
  padding-left: 4px;
}
.trunk {
  width: 19px;
  height: 16px;
  margin-left: 6px;
  box-sizing: border-box;
  border-left: 1px dotted #808080;
}
.stem {
  align-self: flex-start;
  height: 16px;
  border-left: 1px dotted #808080;
}
.last .stem {
  height: 8px;
}
.twig {
  width: 10px;
  border-top: 1px dotted #808080;
}
.chosen .label {
  margin-left: 1px;
  padding: 0 4px 0 3px;
  background: #d9d9d9;
}

.content {
  display: flex;
  flex: 1;
  flex-direction: column;
  min-width: 0;
}
.edit {
  align-self: auto;
  flex: none;
  height: 27px;
  padding-left: 4px;
}
.edit .sep {
  margin: 0 -3px 0 -1px;
}
.floor {
  display: flex;
  align-items: center;
  gap: 6px;
}
.pick {
  display: flex;
  align-items: center;
  width: 62px;
  height: 22px;
  background: #fff;
}
.pick select {
  flex: 1;
}
.split {
  display: flex;
  flex: 1;
  min-height: 0;
  gap: 4px;
}
.parts {
  display: flex;
  flex-direction: column;
  flex: none;
  width: 183px;
  margin: 5px 0 3px;
}
.find {
  display: flex;
  height: 25px;
  background: #fff;
}
.find input {
  flex: 1;
  min-width: 0;
  box-sizing: border-box;
  height: 24px;
  margin: 1px 0 0 1px;
  border: 1px solid #6e6e6e;
  padding: 0 2px;
}
.find input::placeholder {
  color: #757575;
}
.find button {
  width: 25px;
  line-height: 0;
}
.parttree {
  padding: 2px 0 0 6px;
}
.parttree .stem {
  margin-left: 25px;
}
.parttree .twig {
  width: 8px;
}
.item {
  display: flex;
  align-items: center;
  gap: 8px;
  height: 16px;
  padding: 0 4px 0 3px;
}
.item.on {
  background: #316ac5;
}
.gear {
  width: 12px;
  height: 12px;
}

.editor {
  display: flex;
  flex: 1;
  flex-direction: column;
  min-width: 0;
}
.tabs {
  display: flex;
  height: 21px;
  margin-top: 1px;
}
.tabs button {
  width: 64px;
  border: 1px solid #d9d9d9;
  border-bottom: 0;
  background: #fff;
}
.pane {
  display: flex;
  flex: 1;
  min-height: 0;
  border: 1px solid #dcdcdc;
  padding: 2px 3px 1px;
  margin-bottom: 3px;
  background: #fff;
}
.sheet {
  flex: 1;
  border: 1px solid #a0a5a5;
  padding: 1px;
}
.gridwrap {
  position: relative;
  width: 369px;
}
table {
  width: 369px;
  table-layout: fixed;
  border-collapse: separate;
  border-spacing: 0;
}
.cno { width: 21px; }
.cname { width: 191px; }
.cval { width: 126px; }
.cadd { width: 31px; }
th,
td {
  box-sizing: border-box;
  height: 19px;
  padding: 0;
  border: 1px solid #c0c0c0;
  border-width: 0 1px 1px 0;
  font-weight: 400;
  line-height: 16px;
  white-space: nowrap;
  overflow: hidden;
}
thead th {
  height: 23px;
  background: linear-gradient(#fafafa, #ececec);
}
thead .hot {
  background: linear-gradient(#f8dda0, #f1bf66);
  color: #600040;
}
tbody th {
  background: linear-gradient(90deg, #fcfcfc, #ededed);
}
.cell {
  display: flex;
  align-items: center;
  height: 18px;
}
.name .cell {
  padding-top: 1px;
  height: 17px;
}
.slot {
  flex: none;
  width: 18px;
  padding-left: 2px;
  line-height: 0;
}
.key .name {
  color: #00f;
}
.group .name {
  color: #808080;
}
.active th {
  background: #fbc883;
  color: #600040;
}
.active .name {
  background: #0078d7;
  color: #fff;
}
.active .val {
  background: #d9ebf9;
}
.val .cell {
  padding-left: 2px;
}
.bar {
  width: 12px;
  height: 12px;
  flex: none;
}
.add {
  text-align: center;
  line-height: 0;
}
.add input {
  width: 13px;
  height: 13px;
  border: 1px solid #222;
  background: #fff;
  vertical-align: middle;
}
.add input:checked {
  background: #0078d7;
}
.plus {
  width: 13px;
  height: 13px;
  border: 1px solid #b0b0b0;
  background:
    linear-gradient(#000, #000) center / 7px 1px no-repeat,
    linear-gradient(#000, #000) center / 1px 7px no-repeat,
    #fff;
}
.circled {
  position: absolute;
  left: -14px;
  top: 55px;
  width: 340px;
  height: 32px;
  fill: none;
  stroke: #f00;
  stroke-width: 3px;
}
.remark {
  margin: 26px 0 0 58px;
  color: #f00;
  font-size: 23px;
  font-weight: 500;
  line-height: 34px;
}

.status {
  display: flex;
  gap: 2px;
  height: 20px;
  background: #fff;
}
.status > span {
  box-sizing: border-box;
  height: 20px;
  border: 1px solid #d0d0d0;
  padding-left: 1px;
  background: linear-gradient(#fcfcfc, #eee);
  line-height: 18px;
  white-space: nowrap;
}
.s1 { width: 148px; }
.s2 { width: 78px; }
.s3 { width: 98px; }
.s4 { width: 48px; }
.s5 { flex: 1; }
.s6 { width: 70px; }

.taskbar {
  display: flex;
  flex: none;
  height: 40px;
  background: #000c10;
  color: #fff;
}
.start {
  width: 48px;
  background: #000;
  line-height: 0;
}
.cortana {
  display: flex;
  align-items: center;
  box-sizing: border-box;
  width: 344px;
  padding: 0 12px 0 9px;
  background: #333;
}
.halo {
  box-sizing: border-box;
  width: 22px;
  height: 22px;
  border: 3px solid #fff;
  border-radius: 50%;
}
.cortana input {
  flex: 1;
  padding-left: 5px;
  font-size: 14px;
}
.cortana input::placeholder {
  color: #a0a0a0;
}
.mic {
  width: 16px;
  height: 20px;
}
.apps {
  display: flex;
  gap: 1px;
  padding-left: 2px;
}
.apps.open {
  flex: 1;
  padding-left: 6px;
}
.apps button {
  box-sizing: border-box;
  width: 48px;
  line-height: 0;
}
.apps svg {
  width: 24px;
  height: 24px;
}
.apps .running {
  background: linear-gradient(#76b9ed, #76b9ed) center bottom / 40px 2px no-repeat;
}
.apps .front {
  background:
    linear-gradient(#76b9ed, #76b9ed) center bottom / 48px 2px no-repeat,
    #383f42;
}
.cpu,
.clock {
  flex: none;
  align-self: center;
  font-size: 12px;
  line-height: 18px;
  text-align: center;
}
.cpu {
  width: 52px;
}
.tray {
  display: flex;
  align-items: center;
  gap: 9px;
  margin-left: 15px;
  font-size: 13px;
}
.clock {
  width: 60px;
  margin-left: 18px;
}
.notice {
  width: 54px;
  margin-right: 6px;
  line-height: 0;
}
.notice svg {
  width: 18px;
  height: 18px;
}

.ball {
  position: absolute;
  left: 937px;
  top: 0;
  width: 56px;
  height: 24px;
  color: #fff;
  text-align: center;
}
.ball svg {
  position: absolute;
  left: 0;
  top: 0;
  width: 56px;
  height: 24px;
}
.ball span {
  position: relative;
  font-weight: 700;
  line-height: 14px;
}
.ime {
  position: absolute;
  right: 166px;
  top: 9px;
  display: flex;
  align-items: center;
  justify-content: space-between;
  box-sizing: border-box;
  width: 172px;
  height: 24px;
  padding: 0 3px 0 20px;
  border: 1px solid #b5c5dd;
  background: #fff;
  color: #1e73d2;
}
.ime b {
  font-size: 15px;
}
.ime b:first-of-type {
  margin-left: 6px;
}
.slogo {
  position: absolute;
  left: -14px;
  top: -4px;
  width: 28px;
  height: 28px;
}
.badge {
  position: relative;
  line-height: 0;
}
.badge small {
  position: absolute;
  right: -1px;
  bottom: 1px;
  color: #8fa0bd;
  font-size: 9px;
  font-weight: 700;
  line-height: 9px;
}
</style>
